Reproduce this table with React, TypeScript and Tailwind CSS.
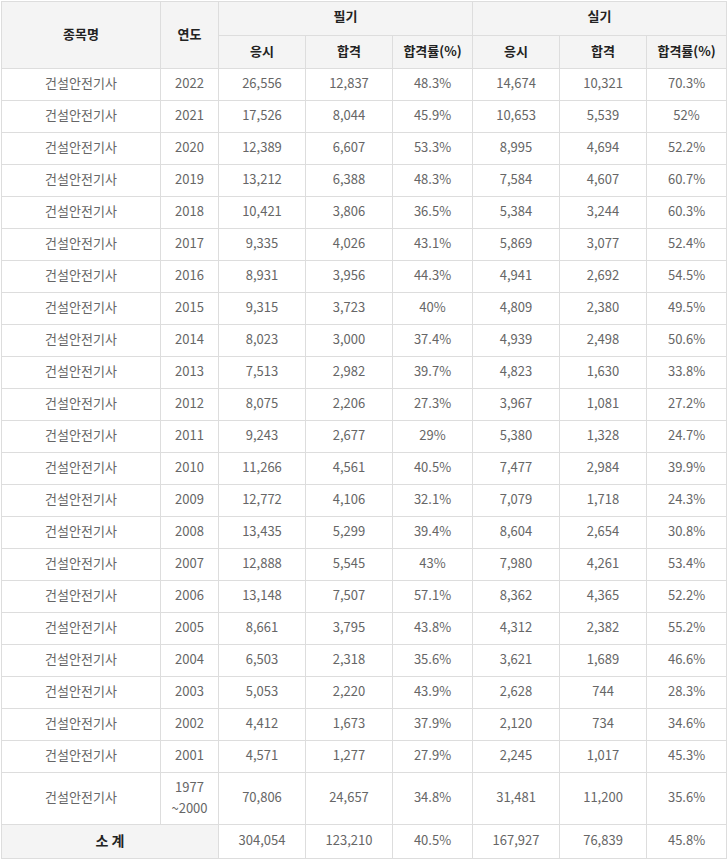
const rows: [string, string, string, string, string, string, string][] = [
  ["2022", "26,556", "12,837", "48.3%", "14,674", "10,321", "70.3%"],
  ["2021", "17,526", "8,044", "45.9%", "10,653", "5,539", "52%"],
  ["2020", "12,389", "6,607", "53.3%", "8,995", "4,694", "52.2%"],
  ["2019", "13,212", "6,388", "48.3%", "7,584", "4,607", "60.7%"],
  ["2018", "10,421", "3,806", "36.5%", "5,384", "3,244", "60.3%"],
  ["2017", "9,335", "4,026", "43.1%", "5,869", "3,077", "52.4%"],
  ["2016", "8,931", "3,956", "44.3%", "4,941", "2,692", "54.5%"],
  ["2015", "9,315", "3,723", "40%", "4,809", "2,380", "49.5%"],
  ["2014", "8,023", "3,000", "37.4%", "4,939", "2,498", "50.6%"],
  ["2013", "7,513", "2,982", "39.7%", "4,823", "1,630", "33.8%"],
  ["2012", "8,075", "2,206", "27.3%", "3,967", "1,081", "27.2%"],
  ["2011", "9,243", "2,677", "29%", "5,380", "1,328", "24.7%"],
  ["2010", "11,266", "4,561", "40.5%", "7,477", "2,984", "39.9%"],
  ["2009", "12,772", "4,106", "32.1%", "7,079", "1,718", "24.3%"],
  ["2008", "13,435", "5,299", "39.4%", "8,604", "2,654", "30.8%"],
  ["2007", "12,888", "5,545", "43%", "7,980", "4,261", "53.4%"],
  ["2006", "13,148", "7,507", "57.1%", "8,362", "4,365", "52.2%"],
  ["2005", "8,661", "3,795", "43.8%", "4,312", "2,382", "55.2%"],
  ["2004", "6,503", "2,318", "35.6%", "3,621", "1,689", "46.6%"],
  ["2003", "5,053", "2,220", "43.9%", "2,628", "744", "28.3%"],
  ["2002", "4,412", "1,673", "37.9%", "2,120", "734", "34.6%"],
  ["2001", "4,571", "1,277", "27.9%", "2,245", "1,017", "45.3%"],
];

const totals = ["304,054", "123,210", "40.5%", "167,927", "76,839", "45.8%"];
const lastRow = ["70,806", "24,657", "34.8%", "31,481", "11,200", "35.6%"];

const th = "border border-[#dddddd] bg-[#f4f4f4] font-bold text-[#222] text-[13px] pb-[3px]";
const td = "border border-[#dddddd] text-center text-[13px] text-[#666] pb-[3px]";

const App = () => {
  return (
    <div className="w-[727px] bg-white pt-px pl-px font-['Malgun_Gothic','Noto_Sans_CJK_KR',sans-serif]">
      <table className="w-[725px] table-fixed border-collapse">
        <colgroup>
          <col className="w-[159px]" />
          <col className="w-[58px]" />
          <col className="w-[87px]" />
          <col className="w-[87px]" />
          <col className="w-[80px]" />
          <col className="w-[87px]" />
          <col className="w-[87px]" />
          <col className="w-[80px]" />
        </colgroup>
        <thead>
          <tr className="h-[34px]">
            <th rowSpan={2} className={th}>종목명</th>
            <th rowSpan={2} className={th}>연도</th>
            <th colSpan={3} className={`${th} pb-[5px]`}>필기</th>
            <th colSpan={3} className={`${th} pb-[5px]`}>실기</th>
          </tr>
          <tr className="h-[33px]">
            <th className={th}>응시</th>
            <th className={th}>합격</th>
            <th className={th}>합격률(%)</th>
            <th className={th}>응시</th>
            <th className={th}>합격</th>
            <th className={th}>합격률(%)</th>
          </tr>
        </thead>
        <tbody>
          {rows.map((r) => (
            <tr key={r[0]} className="h-[32px]">
              <td className={td}>건설안전기사</td>
              {r.map((c, i) => (
                <td key={i} className={td}>{c}</td>
              ))}
            </tr>
          ))}
          <tr className="h-[52px]">
            <td className={td}>건설안전기사</td>
            <td className={`${td} leading-[21px]`}>
              1977
              <br />
              ~2000
            </td>
            {lastRow.map((c, i) => (
              <td key={i} className={td}>{c}</td>
            ))}
          </tr>
          <tr className="h-[34px]">
            <td colSpan={2} className={`${th} text-center text-[14px]`}>소 계</td>
            {totals.map((c, i) => (
              <td key={i} className={td}>{c}</td>
            ))}
          </tr>
        </tbody>
      </table>
    </div>
  );
};

export default App;
